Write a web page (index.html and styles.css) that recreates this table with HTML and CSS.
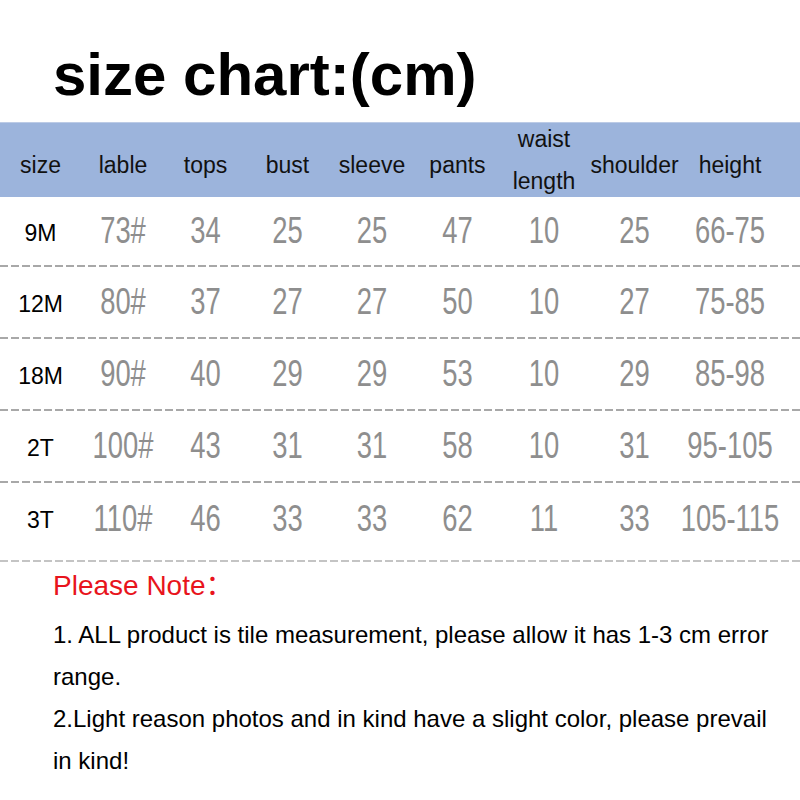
FILE: index.html
```html
<!DOCTYPE html>
<html>
<head>
<meta charset="utf-8">
<link rel="stylesheet" href="styles.css">
</head>
<body>
<div class="page">
  <h1 class="title">size chart:(cm)</h1>
  <div class="table">
    <div class="row head">
      <div class="cell">size</div>
      <div class="cell">lable</div>
      <div class="cell">tops</div>
      <div class="cell">bust</div>
      <div class="cell">sleeve</div>
      <div class="cell">pants</div>
      <div class="cell two">waist<br>length</div>
      <div class="cell">shoulder</div>
      <div class="cell">height</div>
    </div>
    <div class="row data first">
      <div class="cell sz">9M</div>
      <div class="cell">73#</div><div class="cell">34</div><div class="cell">25</div><div class="cell">25</div>
      <div class="cell">47</div><div class="cell">10</div><div class="cell">25</div><div class="cell">66-75</div>
    </div>
    <div class="row data">
      <div class="cell sz">12M</div>
      <div class="cell">80#</div><div class="cell">37</div><div class="cell">27</div><div class="cell">27</div>
      <div class="cell">50</div><div class="cell">10</div><div class="cell">27</div><div class="cell">75-85</div>
    </div>
    <div class="row data">
      <div class="cell sz">18M</div>
      <div class="cell">90#</div><div class="cell">40</div><div class="cell">29</div><div class="cell">29</div>
      <div class="cell">53</div><div class="cell">10</div><div class="cell">29</div><div class="cell">85-98</div>
    </div>
    <div class="row data">
      <div class="cell sz">2T</div>
      <div class="cell">100#</div><div class="cell">43</div><div class="cell">31</div><div class="cell">31</div>
      <div class="cell">58</div><div class="cell">10</div><div class="cell">31</div><div class="cell">95-105</div>
    </div>
    <div class="row data last">
      <div class="cell sz">3T</div>
      <div class="cell">110#</div><div class="cell">46</div><div class="cell">33</div><div class="cell">33</div>
      <div class="cell">62</div><div class="cell">11</div><div class="cell">33</div><div class="cell">105-115</div>
    </div>
  </div>
  <div class="notes">
    <div class="note-title">Please Note：</div>
    <p class="note">1. ALL product is tile measurement, please allow it has 1-3 cm error range.</p>
    <p class="note">2.Light reason photos and in kind have a slight color, please prevail in kind!</p>
  </div>
</div>
</body>
</html>
```
FILE: styles.css
```css
* { box-sizing: border-box; }
html, body { margin: 0; padding: 0; background: #fff; }
body { font-family: "Liberation Sans", Arial, "Noto Sans CJK SC", sans-serif; color: #000; }
.page { width: 800px; height: 800px; overflow: hidden; }

.title {
  margin: 0;
  padding: 40px 0 12px 53px;
  font-size: 60px;
  line-height: 70px;
  font-weight: bold;
  height: 122px;
}

.row {
  display: grid;
  grid-template-columns: 81px 84px 81px 83px 86px 85px 88px 93px 98px;
  align-items: center;
}
.cell {
  display: flex;
  justify-content: center;
  text-align: center;
  white-space: nowrap;
}

.head {
  height: 75px;
  background: #9cb4dc;
  border-top: 1px solid #bccbe6;
  font-size: 23px;
  color: #111;
  padding-top: 5px;
}
.head .two { line-height: 42px; margin-top: -10px; }

.data {
  height: 72px;
  font-family: "Liberation Sans", Arial, sans-serif;
  font-size: 37px;
  color: #8e8e8e;
  background: repeating-linear-gradient(90deg, #a8a8a8 0 8px, transparent 8px 11px) left bottom / 100% 2px no-repeat;
  padding-bottom: 2px;
}
.data .cell { transform: scaleX(0.74); }
.data.first { height: 70px; }
.data.last {
  height: 79px;
  padding-bottom: 8px;
  background: repeating-linear-gradient(90deg, #c4c4c4 0 8px, transparent 8px 11px) left bottom / 100% 2px no-repeat;
}
.data .sz {
  transform: none;
  font-size: 23px;
  color: #000;
  padding-top: 4px;
}

.notes { padding: 4px 20px 0 53px; }
.note-title {
  color: #e8141c;
  font-size: 28px;
  line-height: 40px;
  margin-bottom: 8px;
}
.note {
  margin: 0;
  font-size: 24px;
  line-height: 42px;
  color: #000;
}
```
